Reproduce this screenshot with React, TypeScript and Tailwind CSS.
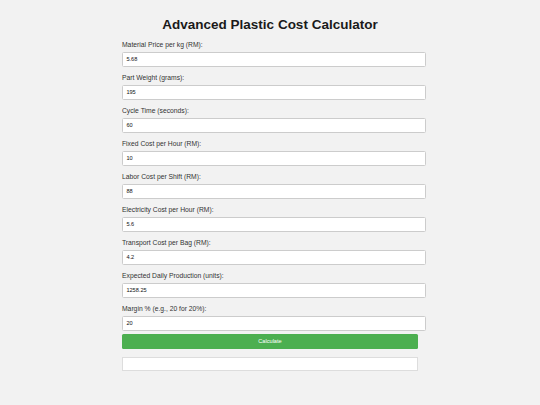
import React from "react";

const fields: [string, string][] = [
  ["Material Price per kg (RM):", "5.68"],
  ["Part Weight (grams):", "195"],
  ["Cycle Time (seconds):", "60"],
  ["Fixed Cost per Hour (RM):", "10"],
  ["Labor Cost per Shift (RM):", "88"],
  ["Electricity Cost per Hour (RM):", "5.6"],
  ["Transport Cost per Bag (RM):", "4.2"],
  ["Expected Daily Production (units):", "1258.25"],
  ["Margin % (e.g., 20 for 20%):", "20"],
];

export default function App() {
  return (
    <div className="min-h-[405px] w-full bg-[#f2f2f2] pt-[17px] font-['Liberation_Sans',Arial,sans-serif] text-[#333]">
      <h1 className="text-center text-[13.5px] font-bold leading-[15.5px] text-[#1a1a1a]">
        Advanced Plastic Cost Calculator
      </h1>
      <div className="mx-auto mt-[8.6px] w-[296px]">
        {fields.map(([label, value]) => (
          <div key={label} className="mb-[7.3px]">
            <label className="block text-[6.75px] leading-[8px] text-[#333]">{label}</label>
            <input
              type="text"
              defaultValue={value}
              className="mt-[2.7px] box-border block h-[15px] w-[304px] rounded-[1.5px] border border-[#cccccc] bg-white px-[3.4px] text-[5.6px] leading-[7px] text-[#111] outline-none"
            />
          </div>
        ))}
        <button className="-mt-[4.3px] block h-[15px] w-[296px] rounded-[1.5px] bg-[#4caf50] text-center text-[5.6px] leading-[15px] text-white">
          Calculate
        </button>
        <div className="mt-[8.3px] h-[13.7px] w-[296px] border border-[#dddddd] bg-white"></div>
      </div>
    </div>
  );
}
